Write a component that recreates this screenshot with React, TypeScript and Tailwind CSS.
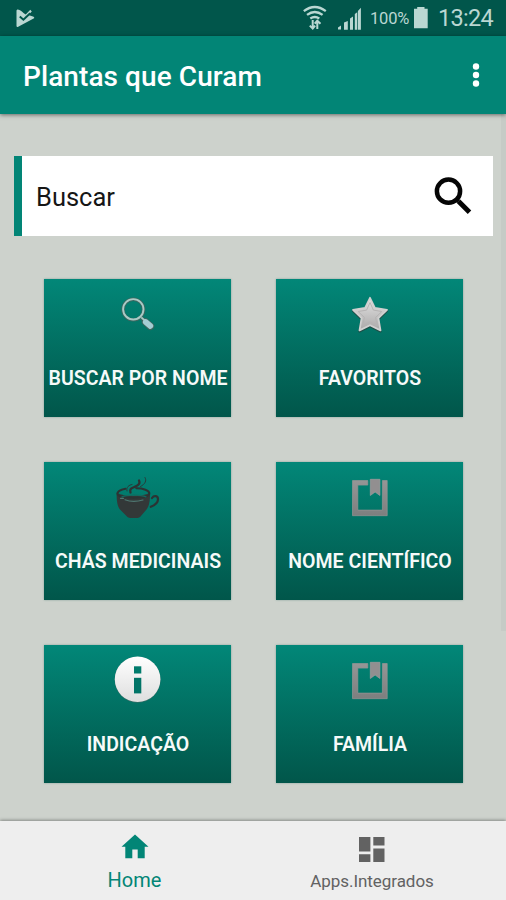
import type { ReactNode } from "react";

function SearchGlass() {
  return (
    <>
      <circle cx="89.3" cy="30.6" r="10.3" fill="none" stroke="#3f665f" strokeWidth="3.4" />
      <path d="M97.5 39l3 3" stroke="#3f665f" strokeWidth="3.6" />
      <path d="M101.5 43l5 4.4" stroke="#3f665f" strokeWidth="7.4" strokeLinecap="round" />
      <circle cx="89.3" cy="30.3" r="10.2" fill="none" stroke="#a9cbc6" strokeWidth="1.9" />
      <path d="M97.3 38.3l4 3.7" stroke="#a9cbc6" strokeWidth="1.8" />
      <path d="M101.7 43l4.7 4" stroke="#a4cdd3" strokeWidth="5.6" strokeLinecap="round" />
    </>
  );
}

function Star() {
  const d = "M94 18.800l4.900 10 12.100 2-8.600 8.300 2.100 12.300L94 46.200l-10.500 5.200 2.100-12.300-8.600-8.300 12.100-2z";
  return (
    <>
      <defs>
        <linearGradient id="star" x1="0" y1="0" x2="0" y2="1">
          <stop offset="0" stopColor="#e4e4e4" />
          <stop offset="1" stopColor="#aaa8a8" />
        </linearGradient>
      </defs>
      <path d={d} transform="translate(0 1.2)" fill="#1f4e47" stroke="#1f4e47" strokeWidth="2" strokeLinejoin="round" />
      <path d={d} fill="url(#star)" stroke="#d0d0d0" strokeWidth="1.8" strokeLinejoin="round" />
      <path d="M94 23.5l3.4 7.6 8.4 1.4-6.2 5.9 1.6 8.4-7.2-3.9-7.2 3.9 1.6-8.4-6.2-5.9 8.4-1.4z" fill="none" stroke="#b6b4b4" strokeWidth="1" />
    </>
  );
}

function Cup() {
  return (
    <g fill="none" stroke="#2c3333" strokeLinecap="round">
      <path d="M72.6 30.500c0 9 .9 14 3.400 17l7 7c1 1.200 2.500 1.600 6.800 1.600s5.700-.4 6.700-1.600l6-7c2.500-3 3.600-8 3.600-17-6 4.500-27.500 4.500-33.500 0z" fill="#333838" stroke="none" />
      <path d="M81.500 26.800c-5 1-8 2.500-8 4.800 0 3 8 4.200 16 4.200s15.800-1.200 15.800-4.200c0-3.300-6-5.300-13-5.300" strokeWidth="2" />
      <path d="M78 34.800c5-2 18-2.300 24 0" stroke="#14695f" strokeWidth="1.300" />
      <path d="M81 37.800c5 2 12 2 18 .2M76.500 36.300h3" stroke="#4f7771" strokeWidth="1.200" />
      <path d="M86.500 30.500c-1.500-5 3-4.500 6-6.500 3-1.500 3.500-3.500 2.500-5.500" strokeWidth="2.300" />
      <path d="M83 29c-1-4 2-6 5-6.500M101 15.500c1.800 3 .5 6.500-4.500 9" strokeWidth=".9" />
      <path d="M108 36c2-3 6-2.500 6 1.200 0 3.300-3.500 6.100-7.200 7.600" strokeWidth="2.200" />
    </g>
  );
}

function Book() {
  return (
    <>
      <defs>
        <linearGradient id="book" x1="0" y1="0" x2="0" y2="1">
          <stop offset="0" stopColor="#969696" />
          <stop offset="1" stopColor="#7d7f7f" />
        </linearGradient>
      </defs>
      <path d="M76.500 18.500h15.300v4.600h-10v25h24.600v-29.600h4.800v35.200h-34.700z" fill="url(#book)" stroke="#959393" strokeWidth=".7" />
      <path d="M94.300 17.300h9.600v16.200l-4.800-3.500-4.800 3.500z" fill="#928f90" stroke="#a09c9d" strokeWidth=".7" />
    </>
  );
}

function Info() {
  return (
    <>
      <defs>
        <linearGradient id="info" x1="0" y1="0" x2="0" y2="1">
          <stop offset="0" stopColor="#fff" />
          <stop offset="1" stopColor="#dedede" />
        </linearGradient>
      </defs>
      <circle cx="93.600" cy="34.800" r="23" fill="#356c65" />
      <circle cx="93.600" cy="34.300" r="22.800" fill="url(#info)" />
      <path d="M90 21.300h7.300v7.200H90z" fill="#017c6d" />
      <path d="M90 32.800h7.300v15.600H90z" fill="#017467" />
    </>
  );
}

function Card({ label, children }: { label: string; children: ReactNode }) {
  return (
    <button className="flex h-[137.5px] flex-col items-center bg-linear-to-b from-[#028778] to-[#01564a] shadow-[0_0_2px_#86a39d]">
      <svg className="h-[84px] w-[187px] shrink-0" viewBox="0 0 187 84">{children}</svg>
      <span className="mt-1 pl-px text-[19.5px] leading-6 font-semibold tracking-[0.03px] whitespace-nowrap text-[#f6faf9]">{label}</span>
    </button>
  );
}

function StatusBar() {
  return (
    <div className="flex h-9 items-center bg-[#01564b] text-[#bad7d2]">
      <svg width="506" height="36" viewBox="0 0 506 36" className="-mr-[506px] shrink-0" fill="currentColor">
        <path d="M17.200 9.600c2.500 0 4 1.600 6.300 3.400l2.200 1.500 4.600-4.800 1.500 1.800-3.400 3.600 5.200 1.600c.9.500.8 1.300 0 1.900l-15.400 8.200c-.8.500-1.700.2-1.700-.8V10.500z" />
        <path d="M19.800 16.500l3.600 3.200 6.800-6.500" fill="none" stroke="#01564b" strokeWidth="2" />
        <g fill="none" stroke="currentColor" strokeWidth="2.300">
          <path d="M303.800 11.200q11-8.300 22 0M307 14.900q7.800-5.700 15.600 0M310.300 18.500q4.500-3 9 0" />
          <path d="M312.700 20v8.500M309.800 25.600l2.900 3 2.400-3M317.300 29v-8M314.700 23.700l2.600-3 3.200 3" strokeWidth="2" />
        </g>
        <path d="M338 27.500l3-2v4h-3zM344 22.500l3.800-1.500v8.700H344zM350 18.500l3-2v13.200h-3zM354.800 14l2.400-1.800v17.500h-2.400zM357.900 11l3-3.300v22h-3z" />
        <path d="M417.200 7h7.300v1.800h3.200v19.400H414V8.800h3.200z" />
      </svg>
      <span className="ml-[370px] w-[68px] pt-0.5 text-[16.500px] tracking-[-0.2px]">100%</span>
      <span className="pt-0.5 text-[23.500px] tracking-[-0.7px]">13:24</span>
    </div>
  );
}

export default function App() {
  return (
    <main className="flex h-[900px] w-[506px] flex-col overflow-hidden bg-[#cdd2cc] font-['Roboto',sans-serif]">
      <StatusBar />
      <header className="z-10 flex h-[78px] shrink-0 items-center justify-between bg-[#028576] pr-[26px] pl-[23px] shadow-[0_1px_4px_rgba(0,0,0,0.5)]">
        <h1 className="pt-1 text-[28px] leading-8 font-medium tracking-[0.08px] text-white">Plantas que Curam</h1>
        <svg width="8" height="26" viewBox="0 0 8 26" fill="white">
          <circle cx="4" cy="4.500" r="3.200" />
          <circle cx="4" cy="13" r="3.200" />
          <circle cx="4" cy="21.500" r="3.200" />
        </svg>
      </header>
      <div className="flex grow justify-between">
        <div className="ml-[14px] w-[479px] pt-[42px]">
          <div className="flex h-20 items-center border-l-8 border-[#028576] bg-white pl-[14px]">
            <span className="grow pt-0.5 text-[25.500px] text-[#161616]">Buscar</span>
            <svg className="mr-[20px]" width="40" height="40" viewBox="0 0 40 40" fill="none" stroke="#050505">
              <circle cx="15.500" cy="15.200" r="11.600" strokeWidth="4.500" />
              <path d="M24 24l1.500 1.500" strokeWidth="4" />
              <path d="M25.500 25.300l11 11" strokeWidth="5" />
            </svg>
          </div>
          <div className="mt-[43px] ml-[30px] grid w-[419px] grid-cols-[187px_187px] gap-x-[45px] gap-y-[45.5px]">
            <Card label="BUSCAR POR NOME"><SearchGlass /></Card>
            <Card label="FAVORITOS"><Star /></Card>
            <Card label="CHÁS MEDICINAIS"><Cup /></Card>
            <Card label="NOME CIENTÍFICO"><Book /></Card>
            <Card label="INDICAÇÃO"><Info /></Card>
            <Card label="FAMÍLIA"><Book /></Card>
          </div>
        </div>
        <div className="h-[517px] w-[5px] bg-[#c6cbc6]" />
      </div>
      <nav className="grid h-[79px] shrink-0 grid-cols-2 bg-[#eee] shadow-[0_-1px_3px_rgba(0,0,0,0.35)]">
        <div className="flex flex-col items-center pt-[13px] pl-4 text-[#028576]">
          <svg width="28" height="25" viewBox="0 0 28 25" fill="currentColor">
            <path d="M14 .5L27.500 12.700h-3.800v11.500h-7V15.500h-5.400v8.700h-7V12.700H.5z" />
          </svg>
          <span className="mt-[9px] text-[20px] leading-6">Home</span>
        </div>
        <div className="flex flex-col items-center pt-4 pr-4 text-[#626262]">
          <svg width="26" height="26" viewBox="0 0 26 26" fill="currentColor">
            <path d="M0 0h11.400v14.400H0zM0 17.300h11.400V25H0zM14.300 0h11.200v8.400H14.300zM14.300 11.500h11.200V25H14.300z" />
          </svg>
          <span className="mt-[5.5px] pl-px text-[17px] leading-6 tracking-[-0.05px]">Apps.Integrados</span>
        </div>
      </nav>
    </main>
  );
}
